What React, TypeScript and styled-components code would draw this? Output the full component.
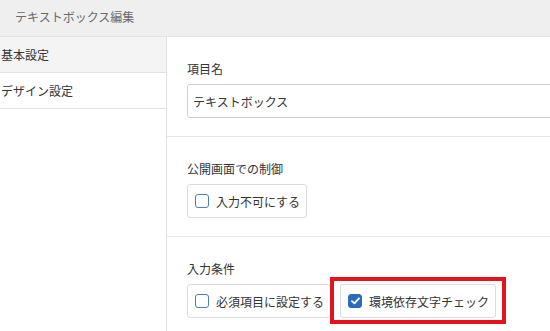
import React, { useState } from 'react';
import styled, { createGlobalStyle } from 'styled-components';

const GlobalStyle = createGlobalStyle`
  html, body {
    margin: 0;
    padding: 0;
    background-color: #fff;
    overflow: hidden;
  }

  body {
    font-family: "Noto Sans CJK JP", "Noto Sans", sans-serif;
    color: #333;
  }
`;

const Page = styled.div`
  width: 550px;
  height: 331px;
  overflow: hidden;
`;

const Header = styled.header`
  height: 36px;
  padding-left: 15px;
  border-bottom: 1px solid #e4e4e4;
  background-color: #efefef;
  color: #6a6a6a;
  font-size: 12px;
  line-height: 34px;
`;

const Body = styled.div`
  display: flex;
  align-items: stretch;
  height: 294px;
`;

const Sidebar = styled.nav`
  flex: none;
  width: 166px;
`;

interface SideItemProps {
  readonly active?: boolean;
}

const SideItem = styled.div<SideItemProps>`
  height: 35px;
  padding-left: 1px;
  border-bottom: 1px solid #e2e2e2;
  background-color: ${(props) => (props.active ? '#f4f4f4' : '#fff')};
  font-size: 12px;
  line-height: 35px;
`;

const Main = styled.main`
  flex: none;
  width: 430px;
  border-left: 1px solid #e2e2e2;
  background-color: #fff;
`;

const Section = styled.section`
  padding: 24px 20px 18px;
  border-bottom: 1px solid #e6e6e6;
`;

const Label = styled.div`
  margin-bottom: 7px;
  font-size: 12px;
  line-height: 16px;
`;

const TextInput = styled.input`
  box-sizing: border-box;
  display: block;
  width: 100%;
  height: 34px;
  padding: 0 5px;
  border: 1px solid #cdcfd6;
  border-radius: 3px;
  color: #333;
  font-family: inherit;
  font-size: 12px;
  outline: none;
`;

const OptionRow = styled.div`
  display: flex;
  align-items: center;
`;

const Option = styled.label`
  box-sizing: border-box;
  display: inline-flex;
  align-items: center;
  gap: 7px;
  height: 34px;
  padding: 0 6px 0 7px;
  border: 1px solid #dcdcdc;
  border-radius: 3px;
  background-color: #fff;
  font-size: 12px;
  white-space: nowrap;
  cursor: pointer;
`;

interface BoxProps {
  readonly checked?: boolean;
}

const Box = styled.span<BoxProps>`
  box-sizing: border-box;
  display: inline-flex;
  align-items: center;
  justify-content: center;
  width: 14px;
  height: 14px;
  border: 1.5px solid ${(props) => (props.checked ? '#2a6bc0' : '#4a7fb5')};
  border-radius: 3px;
  background-color: ${(props) => (props.checked ? '#2a6bc0' : '#fff')};
`;

const Highlight = styled.div`
  position: relative;
  margin-left: 9px;

  &::after {
    content: '';
    position: absolute;
    top: -7px;
    right: -10px;
    bottom: -6px;
    left: -10px;
    border: 4px solid #e3141c;
    pointer-events: none;
  }
`;

interface CheckOptionProps {
  label: string;
  checked: boolean;
  onToggle: () => void;
}

function CheckOption({ label, checked, onToggle }: CheckOptionProps): JSX.Element {
  return (
    <Option onClick={onToggle}>
      <Box checked={checked}>
        {checked && (
          <svg width="9" height="8" viewBox="0 0 9 8">
            <path d="M1 4.2 L3.4 6.4 L8 1.4" fill="none" stroke="#fff" strokeWidth="1.8" strokeLinecap="round" strokeLinejoin="round" />
          </svg>
        )}
      </Box>
      {label}
    </Option>
  );
}

export default function App(): JSX.Element {
  const [name, setName] = useState('テキストボックス');
  const [disabled, setDisabled] = useState(false);
  const [required, setRequired] = useState(false);
  const [charCheck, setCharCheck] = useState(true);

  return (
    <Page>
      <GlobalStyle />
      <Header>テキストボックス編集</Header>
      <Body>
        <Sidebar>
          <SideItem active>基本設定</SideItem>
          <SideItem>デザイン設定</SideItem>
        </Sidebar>
        <Main>
          <Section>
            <Label>項目名</Label>
            <TextInput value={name} onChange={(e) => setName(e.target.value)} />
          </Section>
          <Section>
            <Label>公開画面での制御</Label>
            <OptionRow>
              <CheckOption label="入力不可にする" checked={disabled} onToggle={() => setDisabled(!disabled)} />
            </OptionRow>
          </Section>
          <Section>
            <Label>入力条件</Label>
            <OptionRow>
              <CheckOption label="必須項目に設定する" checked={required} onToggle={() => setRequired(!required)} />
              <Highlight>
                <CheckOption label="環境依存文字チェック" checked={charCheck} onToggle={() => setCharCheck(!charCheck)} />
              </Highlight>
            </OptionRow>
          </Section>
        </Main>
      </Body>
    </Page>
  );
}
